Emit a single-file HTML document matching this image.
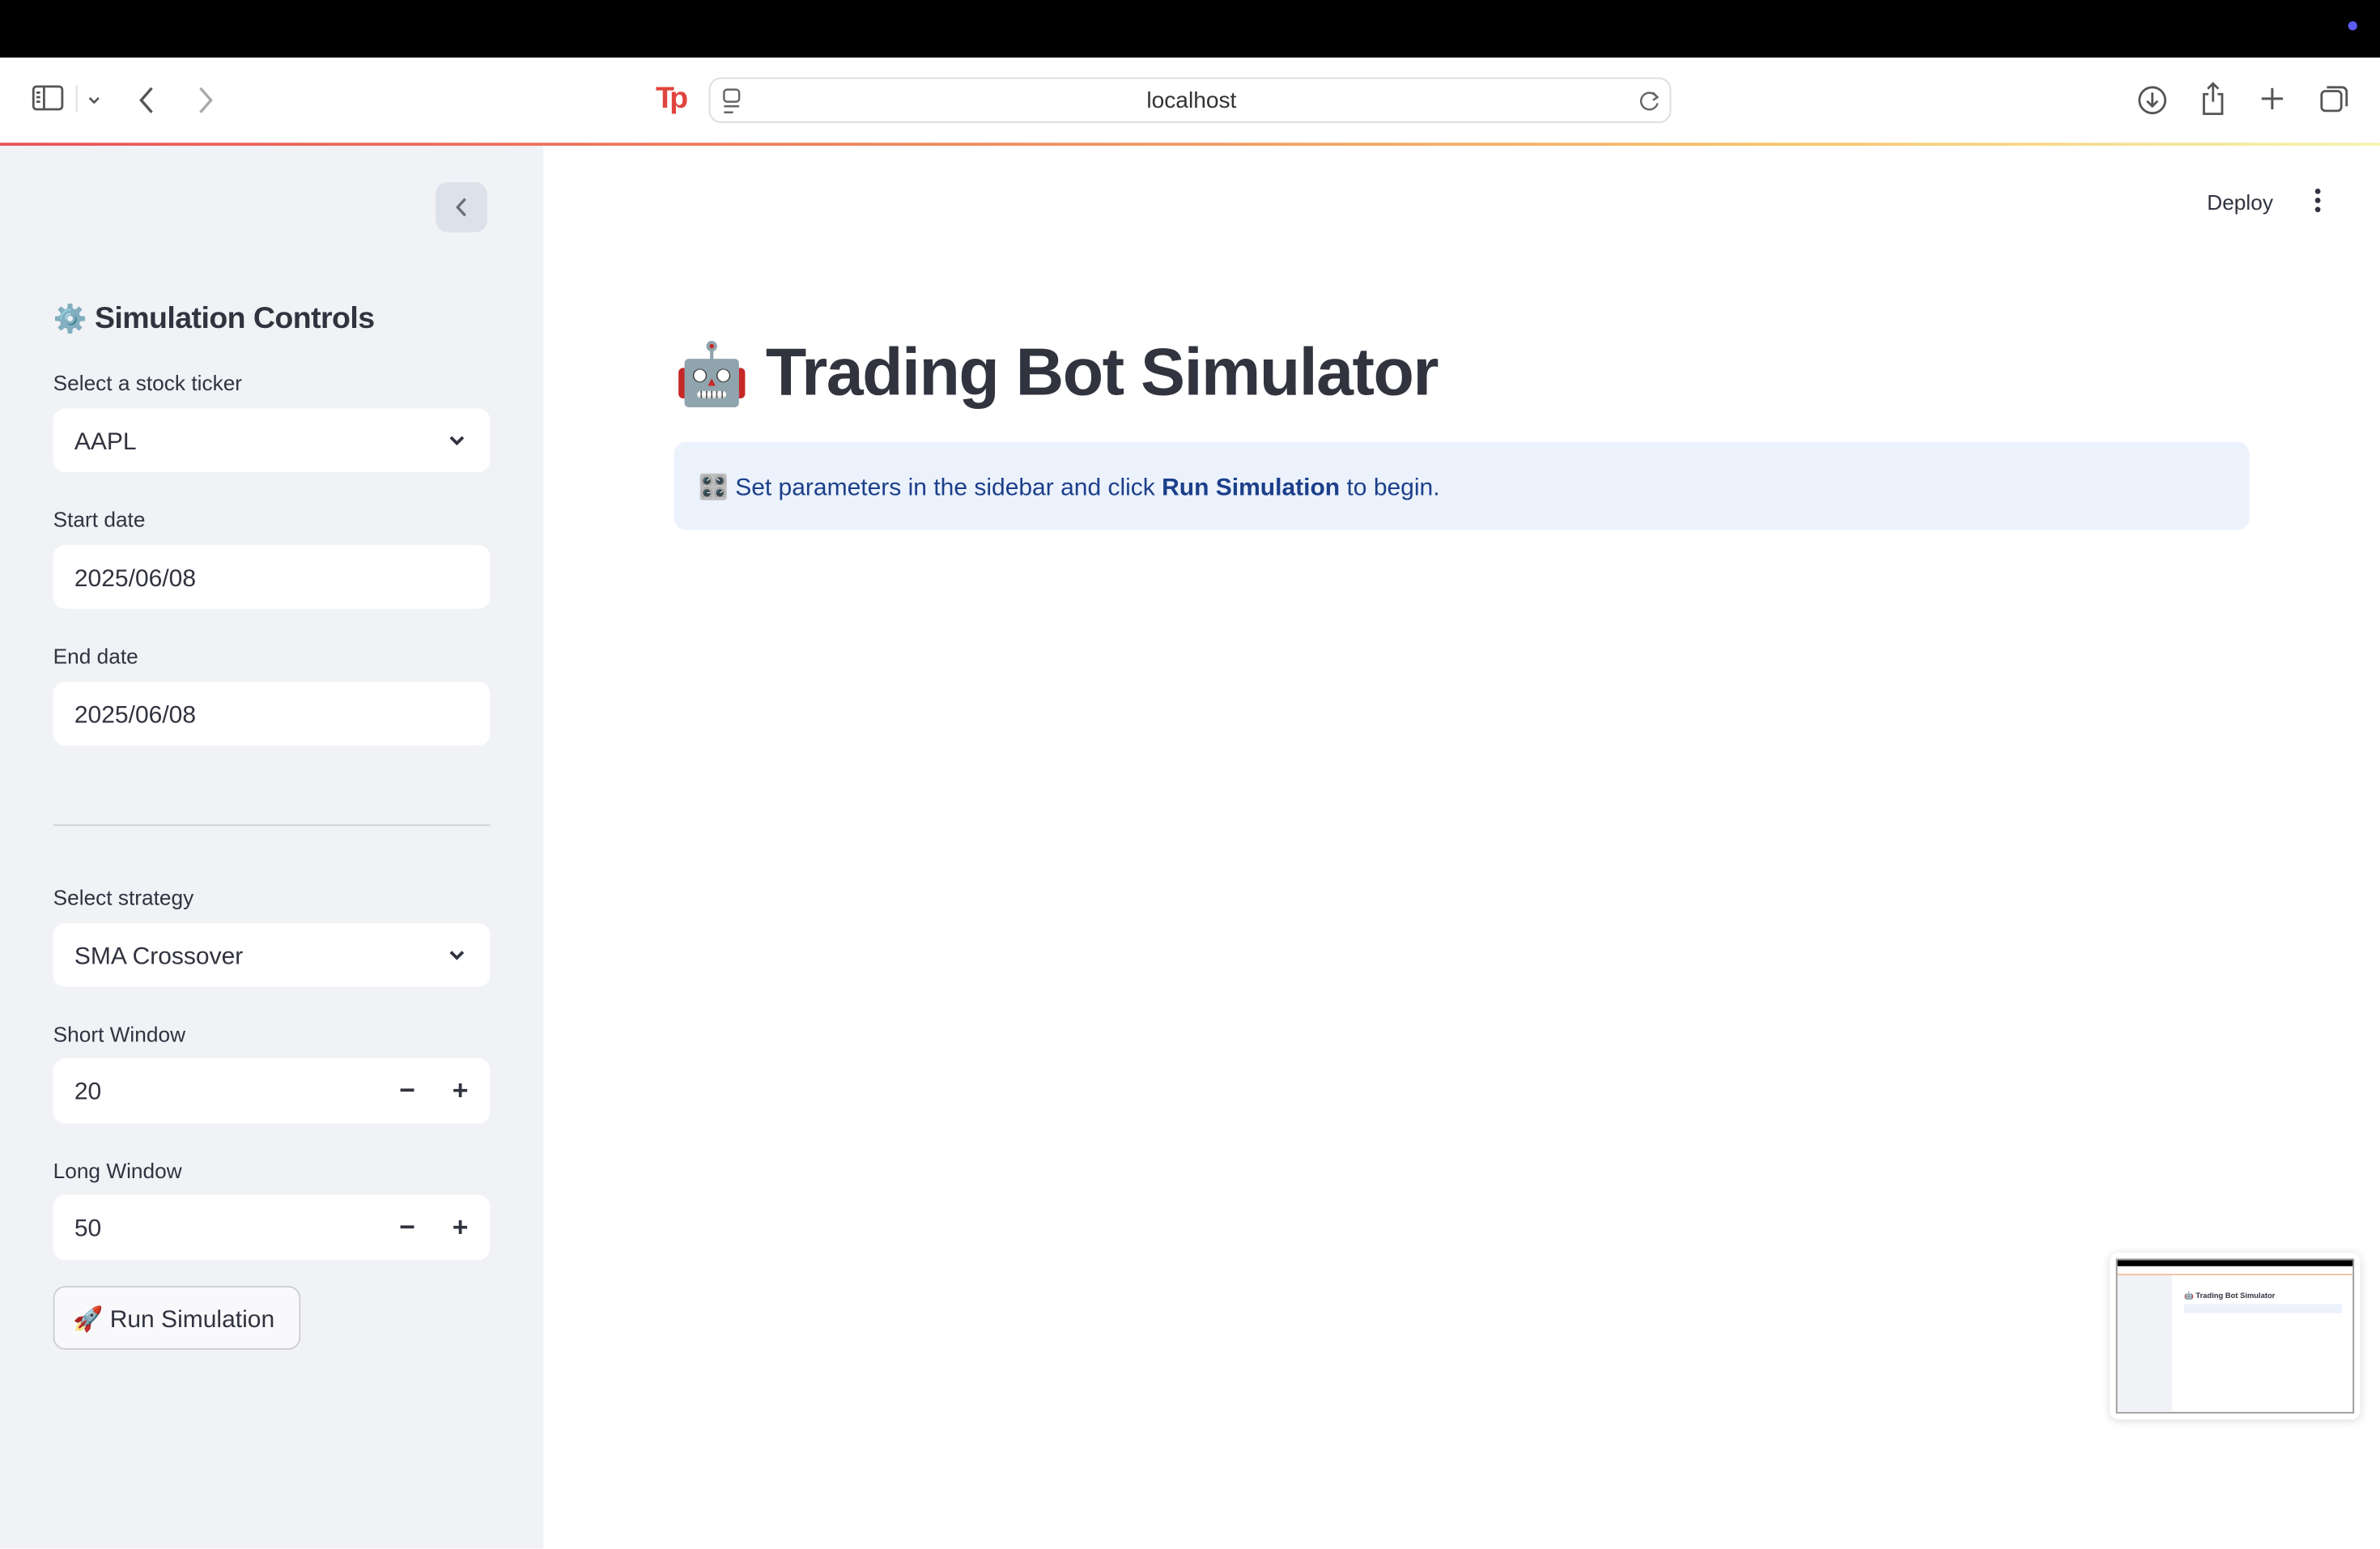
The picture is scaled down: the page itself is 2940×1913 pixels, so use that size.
<!DOCTYPE html>
<html><head><meta charset="utf-8"><style>
*{box-sizing:border-box;margin:0;padding:0}
html,body{width:2940px;height:1912px;overflow:hidden;background:#fff}
#s{position:absolute;left:0;top:0;width:1568px;height:1020px;transform:scale(1.875);transform-origin:0 0;font-family:"Liberation Sans","DejaVu Sans",sans-serif;color:#31333f}
.a{position:absolute}
.top{left:0;top:0;width:1568px;height:38px;background:#000}
.tb{left:0;top:38px;width:1568px;height:56px;background:#fff}
.grad{left:0;top:94px;width:1568px;height:2px;background:linear-gradient(90deg,#e8545a,#f08a5d 40%,#f7c46c 75%,#f4f5b0)}
.side{left:0;top:96px;width:358px;height:924px;background:#f0f2f6}
.lbl{font-size:14px;color:#31333f}
.inp{left:35px;width:288px;height:42px;background:#fff;border-radius:8px;font-size:16px;padding-left:14px;line-height:46px}
.chev{position:absolute;right:16px;top:15px}
.pm{position:absolute;top:0;font-size:18px;font-weight:bold;line-height:42px}
</style></head><body><div id="s">
<div class="a top"></div>
<div class="a" style="left:1547px;top:14px;width:6px;height:6px;border-radius:3px;background:#5b5cf0"></div>
<div class="a tb"></div>
<svg class="a" style="left:20px;top:55px" width="24" height="20" viewBox="0 0 24 20" fill="none" stroke="#555" stroke-width="1.5"><rect x="2" y="2" width="19" height="15" rx="2"/><line x1="9" y1="2" x2="9" y2="17"/><line x1="4" y1="6" x2="6.5" y2="6"/><line x1="4" y1="9" x2="6.5" y2="9"/><line x1="4" y1="12" x2="6.5" y2="12"/></svg>
<div class="a" style="left:50px;top:56px;width:1px;height:18px;background:#ddd"></div>
<svg class="a" style="left:56px;top:60px" width="12" height="12" viewBox="0 0 12 12" fill="none" stroke="#555" stroke-width="1.4"><path d="M3 4.5l3 3 3-3"/></svg>
<svg class="a" style="left:89px;top:55px" width="16" height="22" viewBox="0 0 16 22" fill="none" stroke="#555" stroke-width="1.8"><path d="M11 3L4 11l7 8"/></svg>
<svg class="a" style="left:127px;top:55px" width="16" height="22" viewBox="0 0 16 22" fill="none" stroke="#aaa" stroke-width="1.8"><path d="M5 3l7 8-7 8"/></svg>
<div class="a" style="left:432px;top:54px;font-size:20px;font-weight:bold;color:#e0443e;letter-spacing:-3px">Tp</div>
<div class="a" style="left:467px;top:51px;width:634px;height:30px;border:1px solid #ddd;border-radius:8px;background:#fff"></div>
<svg class="a" style="left:474px;top:57px" width="16" height="20" viewBox="0 0 16 20" fill="none" stroke="#666" stroke-width="1.3"><rect x="3" y="2" width="10" height="8" rx="2"/><line x1="3" y1="13" x2="13" y2="13"/><line x1="3" y1="17" x2="9" y2="17"/></svg>
<div class="a" style="left:0;width:1568px;top:58px;text-align:center;font-size:15px;color:#333;padding-left:2px">localhost</div>
<svg class="a" style="left:1079px;top:58px" width="16" height="18" viewBox="0 0 16 18" fill="none" stroke="#666" stroke-width="1.3"><path d="M12.5 6A5.5 5.5 0 1 0 13 10"/><path d="M10 3l3 3-3 2"/></svg>
<svg class="a" style="left:1407px;top:54px" width="22" height="24" viewBox="0 0 22 24" fill="none" stroke="#555" stroke-width="1.5"><circle cx="11" cy="12" r="8.5"/><path d="M11 7v9M7.5 12.5L11 16l3.5-3.5"/></svg>
<svg class="a" style="left:1448px;top:52px" width="20" height="26" viewBox="0 0 20 26" fill="none" stroke="#555" stroke-width="1.5"><path d="M7 10H4v13h12V10h-3"/><path d="M10 3v12M6.5 6.5L10 3l3.5 3.5"/></svg>
<svg class="a" style="left:1487px;top:55px" width="20" height="20" viewBox="0 0 20 20" fill="none" stroke="#555" stroke-width="1.6"><path d="M10 3v14M3 10h14"/></svg>
<svg class="a" style="left:1527px;top:54px" width="22" height="22" viewBox="0 0 22 22" fill="none" stroke="#555" stroke-width="1.5"><rect x="2.5" y="6" width="13" height="13" rx="2.5"/><path d="M6 3.5h10a3 3 0 0 1 3 3V16"/></svg>
<div class="a grad"></div>
<div class="a side"></div>
<div class="a" style="left:287px;top:120px;width:34px;height:33px;background:#dde1e9;border-radius:8px"></div>
<svg class="a" style="left:297px;top:128px" width="14" height="17" viewBox="0 0 14 17" fill="none" stroke="#6b6f7a" stroke-width="1.8"><path d="M9.5 3L4.5 8.5l5 5.5"/></svg>
<div class="a" style="left:35px;top:199px;font-size:20px;font-weight:bold;white-space:nowrap;letter-spacing:-0.3px"><span style="font-size:18px">⚙️</span> Simulation Controls</div>
<div class="a lbl" style="left:35px;top:244px">Select a stock ticker</div>
<div class="a inp" style="top:269px">AAPL<svg class="chev" width="12" height="12" viewBox="0 0 12 12" fill="none" stroke="#31333f" stroke-width="2"><path d="M2 4l4 4 4-4"/></svg></div>
<div class="a lbl" style="left:35px;top:334px">Start date</div>
<div class="a inp" style="top:359px">2025/06/08</div>
<div class="a lbl" style="left:35px;top:424px">End date</div>
<div class="a inp" style="top:449px">2025/06/08</div>
<div class="a" style="left:35px;top:543px;width:288px;height:1px;background:#cfd2d8"></div>
<div class="a lbl" style="left:35px;top:583px">Select strategy</div>
<div class="a inp" style="top:608px">SMA Crossover<svg class="chev" width="12" height="12" viewBox="0 0 12 12" fill="none" stroke="#31333f" stroke-width="2"><path d="M2 4l4 4 4-4"/></svg></div>
<div class="a lbl" style="left:35px;top:673px">Short Window</div>
<div class="a inp" style="top:697px;height:43px">20<span class="pm" style="left:228px">−</span><span class="pm" style="left:263px">+</span></div>
<div class="a lbl" style="left:35px;top:763px">Long Window</div>
<div class="a inp" style="top:787px;height:43px">50<span class="pm" style="left:228px">−</span><span class="pm" style="left:263px">+</span></div>
<div class="a" style="left:35px;top:847px;width:163px;height:42px;border:1px solid #cdcfd4;border-radius:8px;background:#f9f9fb;font-size:16px;line-height:44px;padding-left:12px;white-space:nowrap">🚀 Run Simulation</div>
<div class="a" style="left:1454px;top:125px;font-size:14px">Deploy</div>
<svg class="a" style="left:1522px;top:123px" width="10" height="18" viewBox="0 0 10 18" fill="#31333f"><circle cx="5" cy="3" r="1.8"/><circle cx="5" cy="9" r="1.8"/><circle cx="5" cy="15" r="1.8"/></svg>
<div class="a" style="left:444px;top:221px;font-size:44px;font-weight:bold;white-space:nowrap;letter-spacing:-0.8px"><span style="font-size:40px">🤖</span> Trading Bot Simulator</div>
<div class="a" style="left:444px;top:291px;width:1038px;height:58px;background:#ebf2fc;border-radius:8px"></div>
<div class="a" style="left:460px;top:311px;font-size:16px;color:#1c3f8a;white-space:nowrap">🎛️ Set parameters in the sidebar and click <b>Run Simulation</b> to begin.</div>
<div class="a" style="left:1390px;top:825px;width:165px;height:110px;background:#fff;border-radius:6px;box-shadow:0 1px 6px rgba(0,0,0,.15)"></div>
<div class="a" style="left:1394px;top:829px;width:157px;height:102px;border:1px solid #999;background:#fff;overflow:hidden">
 <div class="a" style="left:0;top:0;width:157px;height:4px;background:#000"></div>
 <div class="a" style="left:0;top:9px;width:157px;height:1px;background:#f4c0a0"></div>
 <div class="a" style="left:0;top:10px;width:36px;height:92px;background:#f0f2f6"></div>
 <div class="a" style="left:44px;top:21px;font-size:5px;font-weight:bold;white-space:nowrap">🤖 Trading Bot Simulator</div>
 <div class="a" style="left:44px;top:29px;width:104px;height:6px;background:#ebf2fc"></div>
</div>
</div></body></html>
